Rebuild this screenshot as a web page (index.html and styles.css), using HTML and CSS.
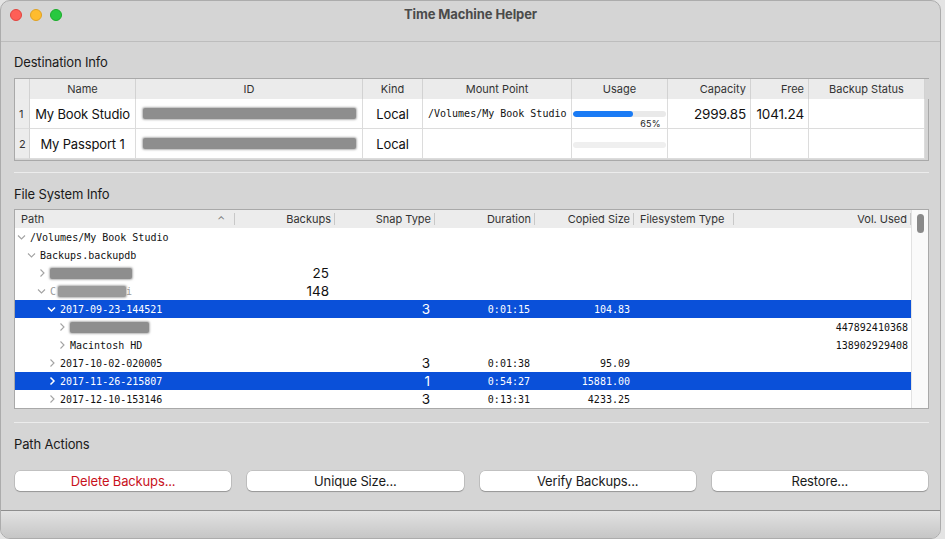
FILE: index.html
```html
<!DOCTYPE html>
<html>
<head>
<meta charset="utf-8">
<link rel="stylesheet" href="styles.css">
</head>
<body>
<div class="window">
  <div class="titlebar">
    <div class="lights">
      <span class="light red"></span><span class="light yellow"></span><span class="light green"></span>
    </div>
    <div class="title">Time Machine Helper</div>
    <div></div>
  </div>

  <div class="content">
    <div class="section-title">Destination Info</div>
    <div class="dest-table">
      <div class="dt-row dt-head">
        <div class="c corner"></div>
        <div class="c center">Name</div>
        <div class="c center">ID</div>
        <div class="c center">Kind</div>
        <div class="c center">Mount Point</div>
        <div class="c center">Usage</div>
        <div class="c right">Capacity</div>
        <div class="c right">Free</div>
        <div class="c center">Backup Status</div>
        <div class="c filler"></div>
      </div>
      <div class="dt-row dt-body">
        <div class="c rownum">1</div>
        <div class="c center">My Book Studio</div>
        <div class="c idcell"><span class="redact id-redact"></span></div>
        <div class="c center">Local</div>
        <div class="c mono mount">/Volumes/My Book Studio</div>
        <div class="c usage">
          <div class="bar"><div class="fill" style="width:65%"></div></div>
          <div class="pct">65%</div>
        </div>
        <div class="c right num">2999.85</div>
        <div class="c right num free">1041.24</div>
        <div class="c"></div>
        <div class="c filler"></div>
      </div>
      <div class="dt-row dt-body">
        <div class="c rownum">2</div>
        <div class="c center">My Passport 1</div>
        <div class="c idcell"><span class="redact id-redact"></span></div>
        <div class="c center">Local</div>
        <div class="c mono mount"></div>
        <div class="c usage empty">
          <div class="bar"></div>
        </div>
        <div class="c"></div>
        <div class="c"></div>
        <div class="c"></div>
        <div class="c filler"></div>
      </div>
    </div>

    <div class="separator first-sep"></div>

    <div class="section-title fs-title">File System Info</div>
    <div class="fs-table">
      <div class="fs-main">
        <div class="fs-row fs-head">
          <div class="h left path-h">Path<span class="sort">&#8963;</span></div>
          <div class="h right">Backups</div>
          <div class="h right">Snap Type</div>
          <div class="h right">Duration</div>
          <div class="h right">Copied Size</div>
          <div class="h left">Filesystem Type</div>
          <div class="h right">Vol. Used</div>
        </div>

        <div class="fs-row">
          <div class="p l0"><svg class="chev" viewBox="0 0 14 18"><path d="M2 7.5 L5.5 11 L9 7.5"/></svg><span class="mono">/Volumes/My Book Studio</span></div>
          <div></div><div></div><div></div><div></div><div></div><div></div>
        </div>
        <div class="fs-row">
          <div class="p l1"><svg class="chev" viewBox="0 0 14 18"><path d="M2 7.5 L5.5 11 L9 7.5"/></svg><span class="mono">Backups.backupdb</span></div>
          <div></div><div></div><div></div><div></div><div></div><div></div>
        </div>
        <div class="fs-row">
          <div class="p l2"><svg class="chev" viewBox="0 0 14 18"><path d="M4.5 5.5 L8 9 L4.5 12.5"/></svg><span class="redact tree-redact-a"></span></div>
          <div class="n bk">25</div><div></div><div></div><div></div><div></div><div></div>
        </div>
        <div class="fs-row">
          <div class="p l2"><svg class="chev" viewBox="0 0 14 18"><path d="M2 7.5 L5.5 11 L9 7.5"/></svg><span class="mono ghost">C</span><span class="redact tree-redact-b"></span><span class="mono ghost">i</span></div>
          <div class="n bk">148</div><div></div><div></div><div></div><div></div><div></div>
        </div>
        <div class="fs-row sel">
          <div class="p l3"><svg class="chev" viewBox="0 0 14 18"><path d="M2 7.5 L5.5 11 L9 7.5"/></svg><span class="mono">2017-09-23-144521</span></div>
          <div></div><div class="n snap">3</div><div class="mono r dur">0:01:15</div><div class="mono r cs">104.83</div><div></div><div></div>
        </div>
        <div class="fs-row">
          <div class="p l4"><svg class="chev" viewBox="0 0 14 18"><path d="M4.5 5.5 L8 9 L4.5 12.5"/></svg><span class="redact tree-redact-c"></span></div>
          <div></div><div></div><div></div><div></div><div></div><div class="mono r vu">447892410368</div>
        </div>
        <div class="fs-row">
          <div class="p l4"><svg class="chev" viewBox="0 0 14 18"><path d="M4.5 5.5 L8 9 L4.5 12.5"/></svg><span class="mono">Macintosh HD</span></div>
          <div></div><div></div><div></div><div></div><div></div><div class="mono r vu">138902929408</div>
        </div>
        <div class="fs-row">
          <div class="p l3"><svg class="chev" viewBox="0 0 14 18"><path d="M4.5 5.5 L8 9 L4.5 12.5"/></svg><span class="mono">2017-10-02-020005</span></div>
          <div></div><div class="n snap">3</div><div class="mono r dur">0:01:38</div><div class="mono r cs">95.09</div><div></div><div></div>
        </div>
        <div class="fs-row sel">
          <div class="p l3"><svg class="chev" viewBox="0 0 14 18"><path d="M4.5 5.5 L8 9 L4.5 12.5"/></svg><span class="mono">2017-11-26-215807</span></div>
          <div></div><div class="n snap">1</div><div class="mono r dur">0:54:27</div><div class="mono r cs">15881.00</div><div></div><div></div>
        </div>
        <div class="fs-row">
          <div class="p l3"><svg class="chev" viewBox="0 0 14 18"><path d="M4.5 5.5 L8 9 L4.5 12.5"/></svg><span class="mono">2017-12-10-153146</span></div>
          <div></div><div class="n snap">3</div><div class="mono r dur">0:13:31</div><div class="mono r cs">4233.25</div><div></div><div></div>
        </div>
      </div>
      <div class="scrollbar"><div class="thumb"></div></div>
    </div>

    <div class="separator second-sep"></div>

    <div class="section-title pa-title">Path Actions</div>
    <div class="buttons">
      <button class="btn danger">Delete Backups...</button>
      <button class="btn">Unique Size...</button>
      <button class="btn">Verify Backups...</button>
      <button class="btn">Restore...</button>
    </div>
  </div>

  <div class="bottombar"></div>
</div>
</body>
</html>
```

FILE: styles.css
```css
* { box-sizing: border-box; }

html, body {
  margin: 0;
  padding: 0;
  background: #e4e4e4;
  font-family: Inter, "Noto Sans", "Liberation Sans", sans-serif;
  color: #111;
}

.window {
  width: 941px;
  height: 539px;
  background: #d5d5d5;
  border: 1px solid #acacac;
  border-radius: 10px;
  overflow: hidden;
  display: flex;
  flex-direction: column;
}

/* Title bar */
.titlebar {
  height: 41px;
  flex: none;
  border-bottom: 1px solid #bdbdbd;
  display: grid;
  grid-template-columns: 1fr auto 1fr;
  align-items: center;
  padding-bottom: 12px;
}
.lights {
  display: flex;
  gap: 8px;
  padding-left: 9px;
}
.light {
  width: 12px;
  height: 12px;
  border-radius: 50%;
  display: block;
}
.light.red { background: #fe5f57; border: 0.5px solid #e0443e; }
.light.yellow { background: #febc2e; border: 0.5px solid #dea123; }
.light.green { background: #28c840; border: 0.5px solid #1aab29; }
.title {
  font-size: 13px;
  font-weight: 700;
  color: #4b4b4b;
  letter-spacing: -0.1px;
  position: relative;
  top: -1px;
}

/* Content */
.content {
  padding: 12px 11px 0 13px;
  display: flex;
  flex-direction: column;
}
.section-title {
  font-size: 13px;
  line-height: 16px;
  color: #1a1a1a;
  letter-spacing: -0.15px;
}

.separator {
  height: 1px;
  background: #ececec;
}
.first-sep { margin-top: 11px; }
.fs-title { margin-top: 13px; }
.second-sep { margin-top: 13px; }
.pa-title { margin-top: 13px; }

/* Destination table */
.dest-table {
  margin-top: 8px;
  border: 1px solid #a9a9a9;
  background: #d5d5d5;
  height: 83px;
}
.dt-row {
  display: grid;
  grid-template-columns: 15px 106px 227px 60px 149px 96px 83px 58px 116px 1fr;
}
.dt-head {
  height: 20px;
  background: #ebebeb;
  font-size: 11px;
  color: #333;
}
.dt-head .c {
  border-right: 1px solid #d2d2d2;
  line-height: 20px;
  padding: 0 4px;
  white-space: nowrap;
}
.dt-head .c.right { padding-right: 4px; }
.dt-body {
  height: 30px;
}
.dt-body .c {
  background: #fff;
  border-right: 1px solid #dcdcdc;
  border-bottom: 1px solid #dcdcdc;
  font-size: 13px;
  line-height: 29px;
  padding-top: 1px;
  white-space: nowrap;
  overflow: hidden;
  letter-spacing: -0.15px;
}
.dt-body .c.rownum {
  background: #ececec;
  font-size: 11px;
  color: #333;
  padding-left: 4px;
  border-right: 1px solid #d2d2d2;
}
.dt-row .c.filler {
  background: #d5d5d5;
  border: none;
}
.center { text-align: center; }
.right { text-align: right; }
.left { text-align: left; }
.dt-body .c.right { padding-right: 4px; }
.dt-body .c.num { font-size: 13.5px; }

.mono {
  font-family: "DejaVu Sans Mono", "Liberation Mono", monospace;
  font-size: 10px;
  letter-spacing: 0;
}
.dt-body .c.mount {
  font-size: 10px;
  padding-left: 5px;
  line-height: 27px;
  letter-spacing: 0;
}

.idcell {
  position: relative;
}
.redact {
  display: inline-block;
  background: #8e8e8e;
  border-radius: 2px;
  box-shadow: 0 0 2px 1px rgba(120,120,120,0.55);
  filter: blur(0.4px);
}
.id-redact {
  width: 213px;
  height: 11px;
  margin-left: 7px;
  vertical-align: middle;
  position: relative;
  top: -2px;
}

.usage {
  padding: 0 1px;
  position: relative;
}
.dt-body .c.usage { padding-top: 0; }
.bar {
  margin-top: 12px;
  height: 6px;
  border-radius: 3px;
  background: #e9e9e9;
  overflow: hidden;
}
.usage.empty .bar { margin-top: 13px; background: #efefef; }
.fill {
  height: 100%;
  background: #1a7bf5;
  border-radius: 3px;
}
.pct {
  font-size: 9px;
  line-height: 10px;
  text-align: right;
  padding-right: 5px;
  margin-top: 2px;
  color: #222;
  letter-spacing: 0.3px;
}

/* File system table */
.fs-table {
  margin-top: 7px;
  border: 1px solid #a9a9a9;
  display: flex;
  background: #fff;
}
.fs-main {
  width: 896px;
}
.fs-row {
  display: grid;
  grid-template-columns: 220px 100px 100px 100px 99px 100px 177px;
  height: 18px;
  align-items: center;
  white-space: nowrap;
}
.fs-head {
  background: #ececec;
  font-size: 11px;
  color: #333;
}
.fs-head .h {
  position: relative;
  height: 18px;
  line-height: 18px;
  padding: 0 4px;
}
.fs-head .h::after {
  content: "";
  position: absolute;
  right: 0;
  top: 3px;
  height: 12px;
  width: 1px;
  background: #c8c8c8;
}
.fs-head .h.left { padding-left: 6px; }
.fs-head .path-h { padding-left: 4px; position: relative; }
.sort {
  position: absolute;
  right: 10px;
  top: 1px;
  font-size: 10px;
  color: #777;
}

.p {
  display: flex;
  align-items: center;
  height: 18px;
}
.p.l0 { padding-left: 1px; }
.p.l1 { padding-left: 11px; }
.p.l2 { padding-left: 21px; }
.p.l3 { padding-left: 31px; }
.p.l4 { padding-left: 41px; }
.chev {
  width: 14px;
  height: 18px;
  flex: none;
  fill: none;
  stroke: #a3a3a3;
  stroke-width: 1.1;
}
.p .mono { color: #111; }
.ghost { color: #9a9a9a !important; }

.n {
  font-size: 13.5px;
  text-align: right;
  line-height: 18px;
}
.n.bk { padding-right: 6px; }
.n.snap { padding-right: 5px; }
.r { text-align: right; }
.dur { padding-right: 5px; }
.cs { padding-right: 4px; }
.vu { padding-right: 3px; }

.tree-redact-a { width: 82px; height: 11px; margin-left: 0; }
.tree-redact-b { width: 68px; height: 11px; margin-left: 2px; background: #9a9a9a; }
.tree-redact-c { width: 79px; height: 11px; margin-left: 0; }

.fs-row.sel {
  background: #0a50d9;
  color: #fff;
}
.fs-row.sel .mono,
.fs-row.sel .n { color: #fff; }
.fs-row.sel .chev { stroke: #fff; stroke-width: 1.5; }

.scrollbar {
  flex: 1;
  background: #fafafa;
  border-left: 1px solid #e2e2e2;
  padding: 4px 0 0 5px;
}
.thumb {
  width: 7px;
  height: 19px;
  border-radius: 4px;
  background: #8a8a8a;
}

/* Buttons */
.buttons {
  margin-top: 19px;
  padding: 0 1px;
  display: grid;
  grid-template-columns: repeat(4, 1fr);
  gap: 16px;
}
.btn {
  height: 20px;
  border: none;
  border-radius: 5px;
  background: #fff;
  box-shadow: 0 0 0 0.5px rgba(0,0,0,0.18), 0 1px 1px rgba(0,0,0,0.22);
  font-family: Inter, "Noto Sans", "Liberation Sans", sans-serif;
  font-size: 13px;
  color: #1a1a1a;
  padding: 0;
  letter-spacing: -0.15px;
}
.btn.danger { color: #c8111c; }

/* Bottom bar */
.bottombar {
  margin-top: auto;
  height: 28px;
  flex: none;
  border-top: 1px solid #8e8e8e;
  background: linear-gradient(#e2e2e2, #c6c6c6);
}
```
